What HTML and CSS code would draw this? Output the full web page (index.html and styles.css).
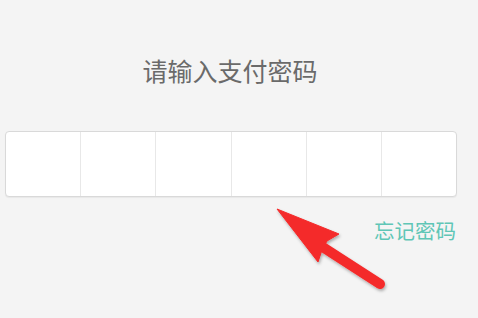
FILE: index.html
```html
<!DOCTYPE html>
<html lang="zh">
<head>
<meta charset="utf-8">
<link rel="stylesheet" href="styles.css">
</head>
<body>
<div class="page">
  <h1 class="title">请输入支付密码</h1>
  <div class="pin">
    <div class="cell"></div>
    <div class="cell"></div>
    <div class="cell"></div>
    <div class="cell"></div>
    <div class="cell"></div>
    <div class="cell"></div>
  </div>
  <div class="forgot-row"><span class="forgot">忘记密码</span></div>
  <svg class="arrow" width="478" height="318" viewBox="0 0 478 318">
    <defs>
      <filter id="sh" x="-20%" y="-20%" width="140%" height="140%">
        <feDropShadow dx="1" dy="2" stdDeviation="1.5" flood-color="#000" flood-opacity="0.3"/>
      </filter>
    </defs>
    <g filter="url(#sh)" fill="#f42a2a" stroke="#f42a2a">
      <line x1="318" y1="244" x2="380" y2="284" stroke-width="10" stroke-linecap="round"/>
      <polygon points="277,209 339,234 327,241 322,250 318,262" stroke-width="1" stroke-linejoin="round"/>
    </g>
  </svg>
</div>
</body>
</html>
```
FILE: styles.css
```css
html, body {
  margin: 0;
  padding: 0;
  background: #f4f4f4;
}
.page {
  position: relative;
  width: 478px;
  height: 318px;
  overflow: hidden;
  font-family: "Noto Sans CJK SC", "Noto Sans", sans-serif;
  display: flex;
  flex-direction: column;
}
.title {
  margin: 54px 0 0 0;
  text-align: center;
  font-size: 25px;
  line-height: 32px;
  font-weight: 400;
  color: #6a6a6a;
  padding-right: 18px;
}
.pin {
  margin: 45px 0 0 5px;
  width: 450px;
  height: 64px;
  display: flex;
  background: #fff;
  border: 1px solid #d9d9d9;
  border-radius: 4px;
  box-shadow: 0 1px 1px rgba(0,0,0,0.05);
}
.cell {
  flex: 1;
  border-left: 1px solid #e8e8e8;
}
.cell:first-child {
  border-left: none;
}
.forgot-row {
  display: flex;
  justify-content: flex-end;
  padding-right: 22px;
  margin-top: 20px;
}
.forgot {
  font-size: 20.5px;
  line-height: 26px;
  color: #5fc6b6;
}
.arrow {
  position: absolute;
  left: 0;
  top: 0;
}
```
